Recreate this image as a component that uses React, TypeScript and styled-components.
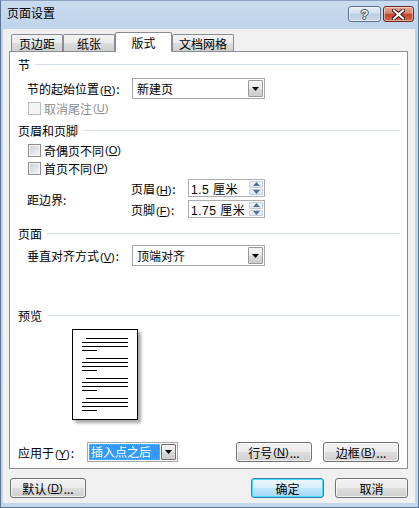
import React from 'react'
import styled, {createGlobalStyle, css} from 'styled-components'

const GlobalStyle = createGlobalStyle`
  html, body {
    margin: 0;
    padding: 0;
    background: #fff;
  }
  body {
    font-family: "Noto Sans CJK SC", "Liberation Sans", sans-serif;
    font-size: 12px;
    color: #000;
  }
`

const Key = ({k}: {k: string}) => (
  <Accel>(<u>{k}</u>)</Accel>
)

const PreviewPage = () => {
  const groups = [8, 28, 48, 68]
  return (
    <Page>
      <svg width="64" height="89" viewBox="0 0 64 89">
        {groups.map(y => (
          <g key={y} stroke="#000" strokeWidth="1">
            <line x1="13" y1={y + 0.5} x2="55" y2={y + 0.5} />
            <line x1="9" y1={y + 4.5} x2="55" y2={y + 4.5} />
            <line x1="9" y1={y + 8.5} x2="55" y2={y + 8.5} />
            <line x1="9" y1={y + 12.5} x2="24" y2={y + 12.5} />
          </g>
        ))}
      </svg>
    </Page>
  )
}

const DropArrow = () => (
  <svg width="7" height="4" viewBox="0 0 7 4">
    <path d="M0 0h7L3.5 4z" fill="#000" />
  </svg>
)

const Spinner = ({value}: {value: string}) => (
  <SpinBox>
    <SpinText>{value}</SpinText>
    <SpinButtons>
      <SpinHalf>
        <svg width="7" height="4" viewBox="0 0 7 4"><path d="M0 4h7L3.5 0z" fill="#4d6f96" /></svg>
      </SpinHalf>
      <SpinHalf>
        <svg width="7" height="4" viewBox="0 0 7 4"><path d="M0 0h7L3.5 4z" fill="#4d6f96" /></svg>
      </SpinHalf>
    </SpinButtons>
  </SpinBox>
)

export default function App() {
  return (
    <>
      <GlobalStyle />
      <Window>
        <TitleBar>
          <Title>页面设置</Title>
          <CaptionButtons>
            <CaptionButton>
              <HelpGlyph>?</HelpGlyph>
            </CaptionButton>
            <CaptionButton $close>
              <svg width="13" height="11" viewBox="0 0 13 11">
                <path d="M2 1.5l9 8M11 1.5l-9 8" stroke="#3b1f1a" strokeWidth="4" strokeLinecap="square" />
                <path d="M2 1.5l9 8M11 1.5l-9 8" stroke="#fff" strokeWidth="2" strokeLinecap="square" />
              </svg>
            </CaptionButton>
          </CaptionButtons>
        </TitleBar>

        <Client>
          <Tabs>
            <Tab $w={52}>页边距</Tab>
            <Tab $w={52}>纸张</Tab>
            <Tab $w={57} $active>版式</Tab>
            <Tab $w={62}>文档网格</Tab>
          </Tabs>

          <Panel>
            <Header $top={4}>节<Rule /></Header>
            <FieldRow $top={6}>
              <FieldLabel>节的起始位置<Key k="R" />:</FieldLabel>
              <Select $w={133}>
                <SelectText>新建页</SelectText>
                <ArrowButton><DropArrow /></ArrowButton>
              </Select>
            </FieldRow>
            <CheckRow $top={1} $disabled>
              <Check $disabled />
              取消尾注<Key k="U" />
            </CheckRow>

            <Header $top={6}>页眉和页脚<Rule /></Header>
            <CheckRow $top={4}>
              <Check />
              奇偶页不同<Key k="O" />
            </CheckRow>
            <CheckRow $top={2}>
              <Check />
              首页不同<Key k="P" />
            </CheckRow>
            <MarginGrid>
              <MarginLabel>距边界:</MarginLabel>
              <SpinLabel>页眉<Key k="H" />:</SpinLabel>
              <Spinner value="1.5 厘米" />
              <SpinLabel>页脚<Key k="F" />:</SpinLabel>
              <Spinner value="1.75 厘米" />
            </MarginGrid>

            <Header $top={7}>页面<Rule /></Header>
            <FieldRow $top={4}>
              <FieldLabel>垂直对齐方式<Key k="V" />:</FieldLabel>
              <Select $w={133}>
                <SelectText>顶端对齐</SelectText>
                <ArrowButton><DropArrow /></ArrowButton>
              </Select>
            </FieldRow>

            <Header $top={41}>预览<Rule /></Header>
            <PreviewArea>
              <PreviewPage />
            </PreviewArea>

            <ApplyRow>
              <ApplyLabel>应用于<Key k="Y" />:</ApplyLabel>
              <Select $w={91} $h={20}>
                <Highlight>插入点之后</Highlight>
                <ArrowButton $split><DropArrow /></ArrowButton>
              </Select>
              <ButtonGroup>
                <Button $w={76}>行号<Key k="N" />...</Button>
                <Button $w={76}>边框<Key k="B" />...</Button>
              </ButtonGroup>
            </ApplyRow>
          </Panel>

          <Footer>
            <Button $w={76}>默认<Key k="D" />...</Button>
            <ButtonGroup>
              <Button $w={73} $focused>确定</Button>
              <Button $w={73}>取消</Button>
            </ButtonGroup>
          </Footer>
        </Client>
      </Window>
    </>
  )
}

const Window = styled.div`
  width: 419px;
  height: 508px;
  box-sizing: border-box;
  display: flex;
  flex-direction: column;
  border: 1px solid #5d7594;
  border-top-color: #8aa2c0;
  background: linear-gradient(#c8dbef, #bed2ea 30px, #c3d6ec);
`

const TitleBar = styled.div`
  height: 28px;
  flex: none;
  display: flex;
  align-items: flex-start;
  justify-content: space-between;
  padding: 0 4px 0 6px;
`

const Title = styled.div`
  margin-top: 4px;
  line-height: 16px;
  font-size: 12px;
  color: #000;
`

const CaptionButtons = styled.div`
  display: flex;
  gap: 2px;
  margin-top: 5px;
`

const CaptionButton = styled.div<{$close?: boolean}>`
  width: ${p => (p.$close ? 31 : 33)}px;
  height: 16px;
  box-sizing: border-box;
  border: 1px solid ${p => (p.$close ? '#6a2a22' : '#5f7390')};
  border-radius: 3px;
  display: flex;
  align-items: center;
  justify-content: center;
  box-shadow: inset 0 0 0 1px rgba(255, 255, 255, 0.45);
  ${p =>
    p.$close
      ? css`
          background: linear-gradient(#e8a493, #d98573 45%, #c2432c 50%, #d5674b);
        `
      : css`
          background: linear-gradient(#e5edf7, #d3dfee 45%, #bccce0 50%, #cbd9ea);
        `}
`

const HelpGlyph = styled.span`
  font-family: "Liberation Sans", sans-serif;
  font-weight: 700;
  font-size: 13px;
  line-height: 13px;
  color: #fff;
  text-shadow: -1px 0 #3a4658, 1px 0 #3a4658, 0 -1px #3a4658, 0 1px #3a4658;
`

const Client = styled.div`
  flex: 1;
  margin: 0 3px 4px 2px;
  background: #f0f0f0;
  display: flex;
  flex-direction: column;
  padding-top: 3px;
`

const Tabs = styled.div`
  display: flex;
  align-items: flex-end;
  height: 19px;
  margin-left: 8px;
`

const Tab = styled.div<{$w: number; $active?: boolean}>`
  width: ${p => p.$w}px;
  box-sizing: border-box;
  display: flex;
  align-items: center;
  justify-content: center;
  border: 1px solid #898c95;
  border-bottom: none;
  border-left-width: ${p => (p.$active ? 1 : 1)}px;
  border-radius: 2px 2px 0 0;
  line-height: 16px;
  ${p =>
    p.$active
      ? css`
          height: 20px;
          background: #fff;
          margin-bottom: -1px;
          position: relative;
          z-index: 1;
        `
      : css`
          height: 17px;
          background: linear-gradient(#f3f3f3, #ebebeb 50%, #dddddd 51%, #cfcfcf);
          padding-top: 1px;
        `}
`

const Panel = styled.div`
  margin-left: 6px;
  width: 399px;
  height: 418px;
  box-sizing: border-box;
  border: 1px solid #898c95;
  background: #fff;
  display: flex;
  flex-direction: column;
`

const Header = styled.div<{$top: number}>`
  margin: ${p => p.$top}px 7px 0 8px;
  height: 16px;
  display: flex;
  align-items: center;
  white-space: nowrap;
`

const Rule = styled.span`
  flex: 1;
  height: 1px;
  margin-left: 5px;
  background: #d5dfe5;
`

const Accel = styled.span`
  font-family: "Liberation Sans", sans-serif;
  font-size: 11px;
  margin: 0 1px;
`

const FieldRow = styled.div<{$top: number}>`
  margin: ${p => p.$top}px 0 0 17px;
  display: flex;
  align-items: center;
  height: 21px;
`

const FieldLabel = styled.div`
  width: 105px;
  white-space: nowrap;
`

const Select = styled.div<{$w: number; $h?: number}>`
  width: ${p => p.$w}px;
  height: ${p => p.$h ?? 21}px;
  box-sizing: border-box;
  border: 1px solid #a5a9b0;
  background: #fff;
  display: flex;
  align-items: center;
  padding: 1px;
`

const SelectText = styled.div`
  flex: 1;
  padding-left: 3px;
`

const Highlight = styled.div`
  flex: 1;
  align-self: stretch;
  margin-right: 1px;
  background: #3399ff;
  color: #fff;
  outline: 1px dotted #e0a060;
  outline-offset: -1px;
  line-height: 16px;
  padding-left: 2px;
`

const ArrowButton = styled.div<{$split?: boolean}>`
  width: 15px;
  align-self: stretch;
  box-sizing: border-box;
  border: 1px solid ${p => (p.$split ? '#707070' : '#9a9a9a')};
  border-radius: 1px;
  background: linear-gradient(#f4f4f4, #e8e8e8 50%, #d8d8d8 51%, #cdcdcd);
  display: flex;
  align-items: center;
  justify-content: center;
`

const CheckRow = styled.div<{$top: number; $disabled?: boolean}>`
  margin: ${p => p.$top}px 0 0 18px;
  height: 16px;
  display: flex;
  align-items: center;
  color: ${p => (p.$disabled ? '#8d8d8d' : '#000')};
`

const Check = styled.span<{$disabled?: boolean}>`
  width: 13px;
  height: 13px;
  box-sizing: border-box;
  margin-right: 3px;
  border: 1px solid ${p => (p.$disabled ? '#bcbcbc' : '#8e8f8f')};
  box-shadow: inset 0 0 0 1px #f4f4f4;
  background: ${p =>
    p.$disabled ? '#f4f4f4' : 'linear-gradient(135deg, #cbcfd5, #f6f6f6)'};
`

const MarginGrid = styled.div`
  margin: 3px 0 0 17px;
  display: grid;
  grid-template-columns: 104px 57px 77px;
  grid-template-rows: 18px 18px;
  row-gap: 3px;
  align-items: center;
`

const MarginLabel = styled.div`
  grid-row: 1 / span 2;
  grid-column: 1;
  padding-top: 1px;
`

const SpinLabel = styled.div`
  white-space: nowrap;
`

const SpinBox = styled.div`
  height: 18px;
  box-sizing: border-box;
  border: 1px solid #abadb3;
  display: flex;
  align-items: center;
  padding: 1px;
`

const SpinText = styled.div`
  flex: 1;
  padding-left: 1px;
  font-family: "Liberation Sans", "Noto Sans CJK SC", sans-serif;
  letter-spacing: 0.5px;
`

const SpinButtons = styled.div`
  width: 14px;
  align-self: stretch;
  display: flex;
  flex-direction: column;
  gap: 1px;
`

const SpinHalf = styled.div`
  flex: 1;
  background: linear-gradient(#f3f6fa, #dfe6ee);
  border: 1px solid #c5cfdb;
  border-radius: 1px;
  display: flex;
  align-items: center;
  justify-content: center;
`

const PreviewArea = styled.div`
  margin: 6px 0 0 62px;
  height: 91px;
`

const Page = styled.div`
  width: 66px;
  height: 91px;
  box-sizing: border-box;
  border: 1px solid #000;
  background: #fff;
  box-shadow: 3px 3px 3px rgba(0, 0, 0, 0.35);
`

const ApplyRow = styled.div`
  margin: 22px 8px 0 8px;
  display: flex;
  align-items: center;
  height: 20px;
`

const ApplyLabel = styled.div`
  width: 69px;
  white-space: nowrap;
`

const ButtonGroup = styled.div`
  margin-left: auto;
  display: flex;
  gap: 11px;
`

const Button = styled.div<{$w: number; $focused?: boolean}>`
  width: ${p => p.$w}px;
  height: 20px;
  box-sizing: border-box;
  border: 1px solid ${p => (p.$focused ? '#3c7fb1' : '#707070')};
  border-radius: 3px;
  display: flex;
  align-items: center;
  justify-content: center;
  white-space: nowrap;
  background: ${p =>
    p.$focused
      ? 'linear-gradient(#eaf6fd, #d9f0fc 50%, #bee6fd 51%, #a7d9f5)'
      : 'linear-gradient(#f2f2f2, #ebebeb 50%, #dddddd 51%, #cfcfcf)'};
  box-shadow: inset 0 0 0 1px ${p => (p.$focused ? '#48dbfc' : 'rgba(255,255,255,0.7)')};
`

const Footer = styled.div`
  margin: 9px 7px 0 7px;
  display: flex;
  align-items: center;
`
